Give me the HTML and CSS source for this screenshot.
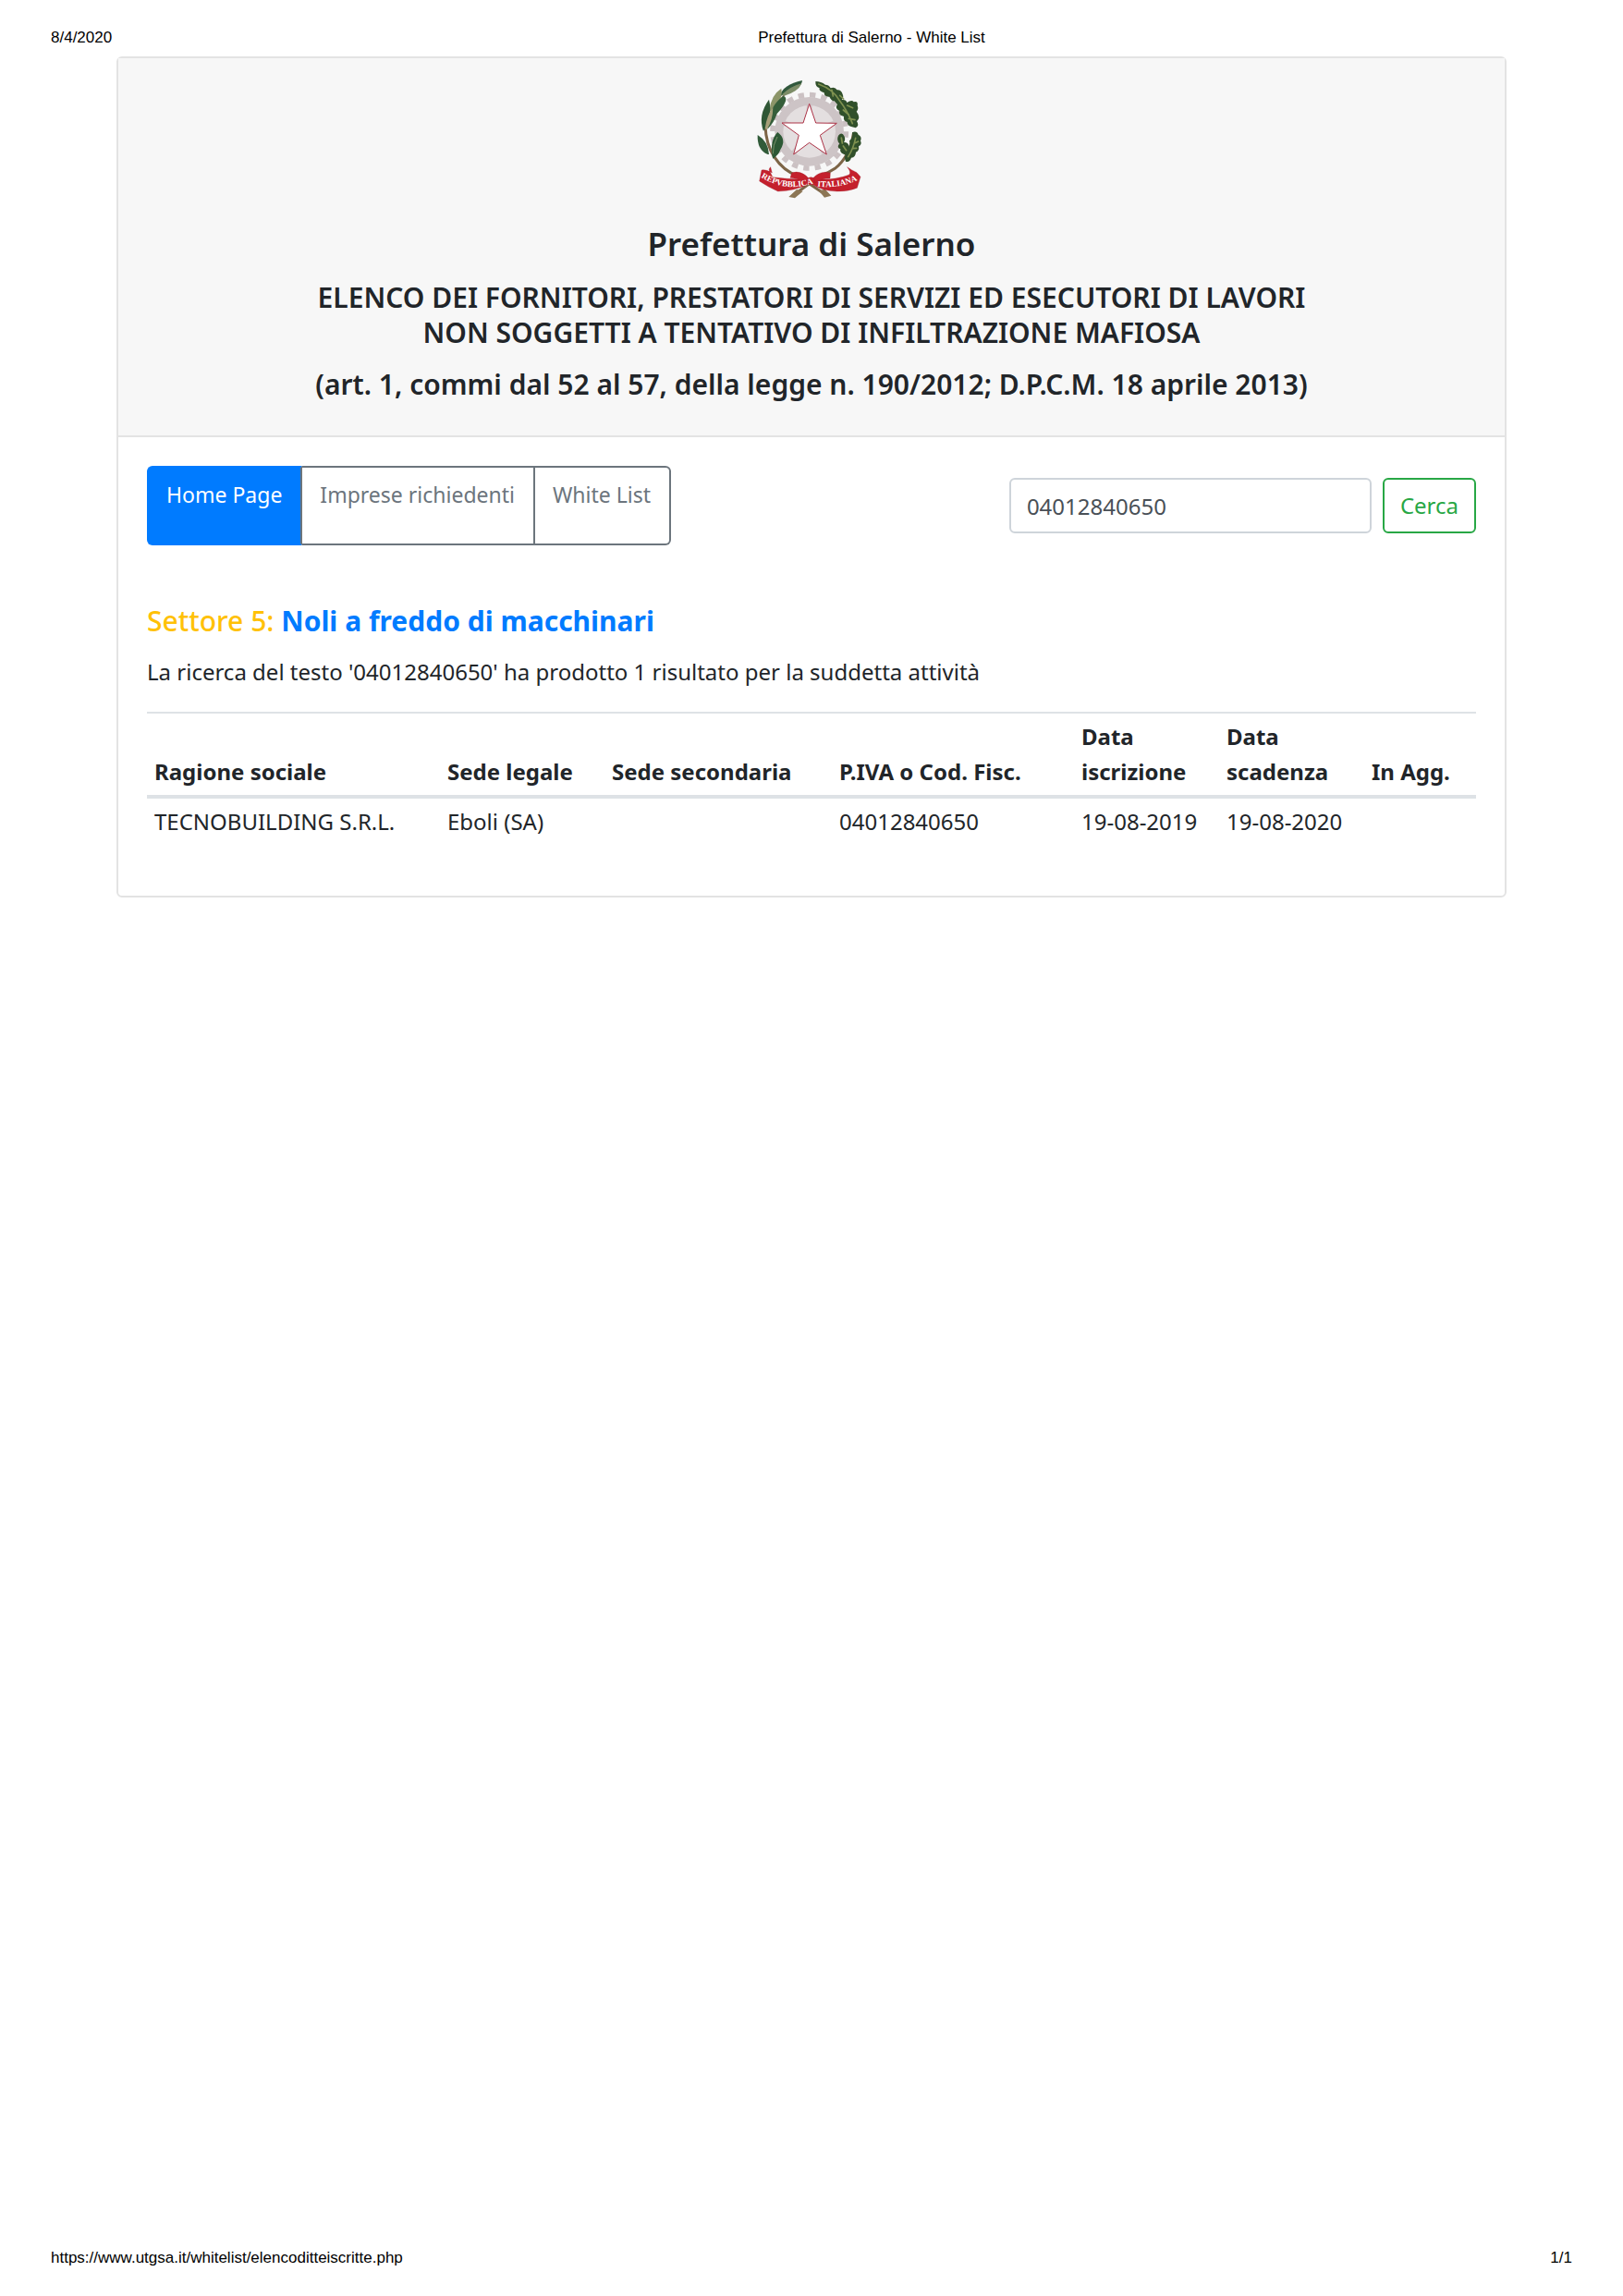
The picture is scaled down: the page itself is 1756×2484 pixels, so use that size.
FILE: index.html
```html
<!DOCTYPE html>
<html lang="it">
<head>
<meta charset="utf-8">
<title>Prefettura di Salerno - White List</title>
<link rel="stylesheet" href="styles.css">
</head>
<body>
<header class="page-head">
  <span>8/4/2020</span>
  <span class="page-title">Prefettura di Salerno - White List</span>
</header>
<main class="card">
  <div class="card-header">
    <svg class="emblem" viewBox="54 46 360 393" role="img" aria-label="Emblema della Repubblica Italiana">
      <circle cx="227" cy="218" r="119" fill="none" stroke="#cbc1c3" stroke-width="17" stroke-dasharray="19 18.4"/>
      <circle cx="227" cy="218" r="112" fill="#cdc4c6"/>
      <circle cx="227" cy="218" r="85" fill="#e4dfe0"/>
      <path d="M227 218V110M227 218L325 186M227 218L288 302M227 218L166 302M227 218L129 186" stroke="#cdc4c6" stroke-width="17"/>
      <path d="M227 128L248 190L316 191L262 230L283 292L227 254L176 292L193 230L138 190L207 190Z" fill="#fff" stroke="#ac3347" stroke-width="3"/>
      <g fill="none" stroke="#7d6547" stroke-linecap="round">
        <path d="M84 200Q86 258 113 300Q142 345 189 362L278 422" stroke-width="9"/>
        <path d="M370 225Q358 300 310 338Q290 352 262 362L176 424" stroke-width="9"/>
        <path d="M84 210Q95 150 165 78" stroke-width="4"/>
      </g>
      <path d="M278 405L298 426L276 432L258 410ZM186 406L160 430L180 434L206 412Z" fill="#8c7655"/>
      <g stroke-width="1">
        <path d="M131 103Q141 65 204 52Q202 78 155 96Z" fill="#31583c"/>
        <path d="M138 98Q168 70 202 62Q190 90 145 102Z" fill="#7d8d68"/>
        <path d="M98 148Q102 100 136 78Q143 115 104 158Z" fill="#8c9568"/>
        <path d="M91 195Q98 135 143 102Q166 111 122 160Q112 190 91 210Z" fill="#365e3a"/>
        <path d="M78 216Q59 165 96 114Q107 150 88 203Z" fill="#2f5735"/>
        <path d="M83 208Q89 165 109 139Q109 180 89 212Z" fill="#a7a07a"/>
        <path d="M92 292Q57 278 59 229Q94 250 96 292Z" fill="#315b39"/>
        <path d="M107 300Q98 246 124 220Q154 242 134 275Q126 296 109 306Z" fill="#2d5835"/>
        <path d="M109 290Q108 262 123 235" fill="none" stroke="#78916a" stroke-width="3"/>
      </g>
      <g fill="#31502b">
        <path d="M247 55Q265 55 279 66Q292 67 296 77Q310 71 317 83Q331 82 335 97Q340 108 332 115Q347 113 349 124Q365 113 371 122Q386 118 383 134Q388 145 380 153Q395 173 381 185Q391 199 377 206L363 202Q350 199 350 187Q336 184 339 169Q320 165 325 151Q308 142 318 130L308 119Q299 119 292 105Q275 106 275 92Q256 86 260 77Q246 73 247 55Z"/>
        <path d="M321 231Q333 217 341 234Q345 245 339 252Q356 252 356 270L350 297L335 290Q325 284 328 275Q314 270 325 257Q314 246 321 231Z"/>
        <path d="M366 221Q381 214 386 228Q399 235 393 248Q399 260 387 266Q390 281 378 285Q377 302 363 303Q357 320 345 315L341 302Q350 289 349 275Q362 262 357 248Q369 239 366 221Z"/>
      </g>
      <g fill="none" stroke="#7f9150" stroke-width="5" stroke-linecap="round">
        <path d="M257 64Q305 81 326 119Q350 150 367 192M300 83L304 103M326 101L338 112M350 133L368 141M337 148L355 163M355 176L375 180"/>
        <path d="M377 239Q370 273 353 300M375 255L386 250M367 273L380 272M337 265L347 279M331 238L334 256"/>
      </g>
      <g fill="#c4202c" stroke="#9c1926" stroke-width="1">
        <path d="M101 333Q92 340 101 352L108 366Q155 372 199 373L229 377L265 373Q315 374 355 359Q365 351 350 333Q363 343 381 351L393 365L382 401Q350 414 317 412Q265 411 232 386Q180 411 125 412Q92 397 65 379L72 343Q85 340 106 352Z"/>
        <path d="M170 352Q200 342 225 370L211 383Q194 371 165 368ZM238 370Q262 343 295 352L294 370Q265 370 246 384Z"/>
        <circle cx="232" cy="378" r="12"/>
      </g>
      <path id="motto-left" d="M70 366Q145 414 231 389" fill="none"/>
      <path id="motto-right" d="M253 396Q330 404 391 372" fill="none"/>
      <text class="motto"><textPath href="#motto-left">REPVBBLICA</textPath></text>
      <text class="motto"><textPath href="#motto-right">ITALIANA</textPath></text>
    </svg>
    <h1 class="office">Prefettura di Salerno</h1>
    <h2 class="subtitle">ELENCO DEI FORNITORI, PRESTATORI DI SERVIZI ED ESECUTORI DI LAVORI<br>NON SOGGETTI A TENTATIVO DI INFILTRAZIONE MAFIOSA</h2>
    <h2 class="subtitle">(art. 1, commi dal 52 al 57, della legge n. 190/2012; D.P.C.M. 18 aprile 2013)</h2>
  </div>
  <div class="card-body">
    <div class="toolbar">
      <nav class="btn-group">
        <a class="tab tab-active" href="#">Home Page</a>
        <a class="tab" href="#">Imprese richiedenti</a>
        <a class="tab" href="#">White List</a>
      </nav>
      <form class="search">
        <input class="search-input" type="text" value="04012840650" aria-label="Testo da cercare">
        <button class="search-button" type="button">Cerca</button>
      </form>
    </div>
    <h2 class="sector"><span class="sector-number">Settore 5:</span> <strong>Noli a freddo di macchinari</strong></h2>
    <p class="result">La ricerca del testo '04012840650' ha prodotto 1 risultato per la suddetta attività</p>
    <table class="table">
      <colgroup><col class="col-name"><col class="col-seat"><col class="col-branch"><col class="col-vat"><col class="col-date"><col class="col-date"><col></colgroup>
      <thead>
        <tr><th>Ragione sociale</th><th>Sede legale</th><th>Sede secondaria</th><th>P.IVA o Cod. Fisc.</th><th>Data iscrizione</th><th>Data scadenza</th><th>In Agg.</th></tr>
      </thead>
      <tbody>
        <tr><td>TECNOBUILDING S.R.L.</td><td>Eboli (SA)</td><td></td><td>04012840650</td><td>19-08-2019</td><td>19-08-2020</td><td></td></tr>
      </tbody>
    </table>
  </div>
</main>
<footer class="page-foot">
  <span>https://www.utgsa.it/whitelist/elencoditteiscritte.php</span>
  <span>1/1</span>
</footer>
</body>
</html>
```
FILE: styles.css
```css
* { box-sizing: border-box; }

body {
  margin: 0;
  min-height: 100vh;
  display: flex;
  flex-direction: column;
  background: #fff;
  color: #212529;
  font-family: "Noto Sans", "Open Sans", sans-serif;
  font-size: 24px;
  line-height: 38px;
}

h1, h2, p { margin: 0; }

.page-head,
.page-foot {
  display: flex;
  justify-content: space-between;
  padding: 0 55px;
  color: #000;
  font-family: "Liberation Sans", Arial, sans-serif;
  font-size: 17px;
  line-height: 20px;
}

.page-head {
  display: grid;
  grid-template-columns: 1fr auto 1fr;
  padding-top: 31px;
}

.page-title { padding-left: 130px; }

.page-foot {
  margin-top: auto;
  padding-bottom: 31px;
}

.card {
  margin: 10px 126px 0;
  border: 2px solid #e3e3e3;
  border-radius: 6px;
}

.card-header {
  display: flex;
  flex-direction: column;
  align-items: center;
  padding: 22px 32px 36px;
  border-bottom: 2px solid #e3e3e3;
  background: #f7f7f7;
  text-align: center;
}

.emblem {
  width: 120px;
  height: 131px;
}

.motto {
  fill: #fff;
  font-family: "Liberation Serif", serif;
  font-size: 27px;
  font-weight: 700;
}

.office {
  margin-top: 25px;
  font-size: 35px;
  font-weight: 600;
  line-height: 46px;
}

.subtitle {
  margin-top: 16px;
  font-size: 30px;
  font-weight: 600;
  line-height: 38px;
}

.subtitle + .subtitle { margin-top: 18px; }

.card-body { padding: 31px; }

.toolbar {
  display: flex;
  align-items: center;
  justify-content: space-between;
}

.btn-group {
  display: flex;
  height: 86px;
  font-size: 23px;
}

.tab {
  padding: 10px 20px 10px 19px;
  border: 2px solid #6c757d;
  color: #6c757d;
  text-decoration: none;
}

.tab + .tab { border-left-width: 0; }
.tab-active {
  border-color: #007bff;
  border-right-color: #6c757d;
  border-radius: 6px 0 0 6px;
  background: #007bff;
  color: #fff;
}
.tab:last-child { border-radius: 0 6px 6px 0; }

.search {
  display: flex;
  gap: 12px;
}

.search-input,
.search-button {
  height: 60px;
  padding: 0 17px;
  border: 2px solid #ced4da;
  border-radius: 6px;
  background: #fff;
  color: #495057;
  font: inherit;
}

.search-input { width: 392px; }

.search-button {
  border-color: #28a745;
  color: #28a745;
}

.sector {
  margin-top: 63px;
  color: #007bff;
  font-size: 30px;
  font-weight: 500;
  line-height: 38px;
}

.sector-number { color: #ffc107; }

.result { margin-top: 17px; }

.table {
  width: 100%;
  margin: 24px 0;
  border-collapse: collapse;
  table-layout: fixed;
}

.table th,
.table td {
  padding: 6px 8px;
  text-align: left;
  vertical-align: top;
}

.table th {
  border-top: 2px solid #dee2e6;
  border-bottom: 4px solid #dee2e6;
  vertical-align: bottom;
}

.col-name { width: 317px; }
.col-seat { width: 178px; }
.col-branch { width: 246px; }
.col-vat { width: 262px; }
.col-date { width: 157px; }
```
